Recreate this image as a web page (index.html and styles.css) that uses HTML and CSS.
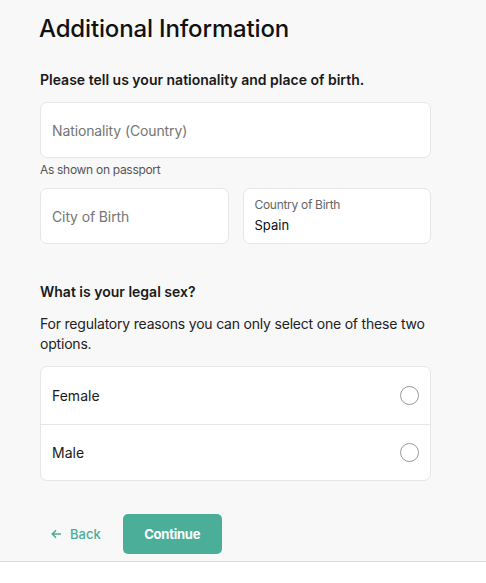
FILE: index.html
```html
<!DOCTYPE html>
<html lang="en">
<head>
<meta charset="utf-8">
<title>Additional Information</title>
<link rel="stylesheet" href="styles.css">
</head>
<body>
<div class="page">
  <main class="content">
    <h1 class="title">Additional Information</h1>
    <p class="lead">Please tell us your nationality and place of birth.</p>
    <div class="field"><span class="placeholder">Nationality (Country)</span></div>
    <p class="hint">As shown on passport</p>
    <div class="row">
      <div class="field"><span class="placeholder">City of Birth</span></div>
      <div class="field field-filled">
        <span class="field-label">Country of Birth</span>
        <span class="field-value">Spain</span>
      </div>
    </div>
    <h2 class="question">What is your legal sex?</h2>
    <p class="desc">For regulatory reasons you can only select one of these two options.</p>
    <div class="options">
      <div class="option"><span>Female</span><span class="radio"></span></div>
      <div class="option"><span>Male</span><span class="radio"></span></div>
    </div>
    <div class="actions">
      <a class="back" href="#">
        <svg class="back-icon" width="11" height="10" viewBox="0 0 11 10"><path d="M10 5H1.5M5 1.3L1.3 5L5 8.7" fill="none" stroke="currentColor" stroke-width="1.6"/></svg>
        <span>Back</span>
      </a>
      <button class="continue" type="button">Continue</button>
    </div>
  </main>
</div>
</body>
</html>
```
FILE: styles.css
```css
* { box-sizing: border-box; }
html, body { margin: 0; padding: 0; background: #ffffff; }
body { font-family: Inter, "Liberation Sans", sans-serif; color: #1a1a1a; }
.page {
  background: #f8f8f8;
  height: 562px;
  border-bottom: 1px solid #dcdcdc;
}
.content {
  width: 471px;
  padding: 13px 0 0 40px;
  display: flex;
  flex-direction: column;
}
.title {
  margin: 0 0 0 -1px;
  font-size: 24px;
  line-height: 32px;
  font-weight: 500;
  color: #111;
  letter-spacing: -0.15px;
}
.lead {
  margin: 25px 0 0;
  font-size: 14px;
  line-height: 20px;
  font-weight: 600;
  color: #1a1a1a;
}
.field {
  margin-top: 12px;
  height: 56px;
  width: 391px;
  background: #fff;
  border: 1px solid #e6e6e6;
  border-radius: 7px;
  display: flex;
  flex-direction: column;
  justify-content: center;
  padding: 0 11px;
}
.placeholder { font-size: 14px; color: #757575; letter-spacing: -0.12px; }
.hint {
  margin: 4px 0 0;
  font-size: 12px;
  line-height: 16px;
  color: #555;
  letter-spacing: -0.3px;
}
.row {
  margin-top: 10px;
  display: grid;
  grid-template-columns: 1fr 1fr;
  gap: 14px;
  width: 391px;
}
.row .field { margin-top: 0; width: auto; }
.field-filled { justify-content: flex-start; padding-top: 8px; }
.field-label { font-size: 12px; line-height: 16px; color: #666; letter-spacing: -0.3px; }
.field-value { font-size: 13px; line-height: 20px; color: #111; margin-top: 2px; }
.question {
  margin: 38px 0 0;
  font-size: 14px;
  line-height: 20px;
  font-weight: 600;
  color: #1a1a1a;
}
.desc {
  margin: 12px 0 0;
  font-size: 14px;
  line-height: 20px;
  color: #222;
  width: 392px;
  letter-spacing: -0.2px;
}
.options {
  margin-top: 12px;
  width: 391px;
  background: #fff;
  border: 1px solid #e6e6e6;
  border-radius: 7px;
}
.option {
  height: 57px;
  display: flex;
  align-items: center;
  justify-content: space-between;
  padding: 0 11px;
  font-size: 14px;
  color: #1a1a1a;
}
.option + .option { border-top: 1px solid #e6e6e6; height: 56px; }
.radio {
  width: 19px;
  height: 19px;
  border: 1px solid #9a9a9a;
  border-radius: 50%;
  background: #fff;
}
.actions {
  margin-top: 33px;
  display: flex;
  align-items: center;
  gap: 22px;
}
.back {
  display: flex;
  align-items: center;
  gap: 8px;
  padding-left: 11px;
  color: #4aae98;
  text-decoration: none;
  font-size: 13px;
  font-weight: 500;
}
.continue {
  width: 99px;
  height: 40px;
  border: none;
  border-radius: 5px;
  background: #4aae98;
  color: #fff;
  font-family: inherit;
  font-size: 13px;
  font-weight: 700;
  letter-spacing: -0.25px;
}
```
